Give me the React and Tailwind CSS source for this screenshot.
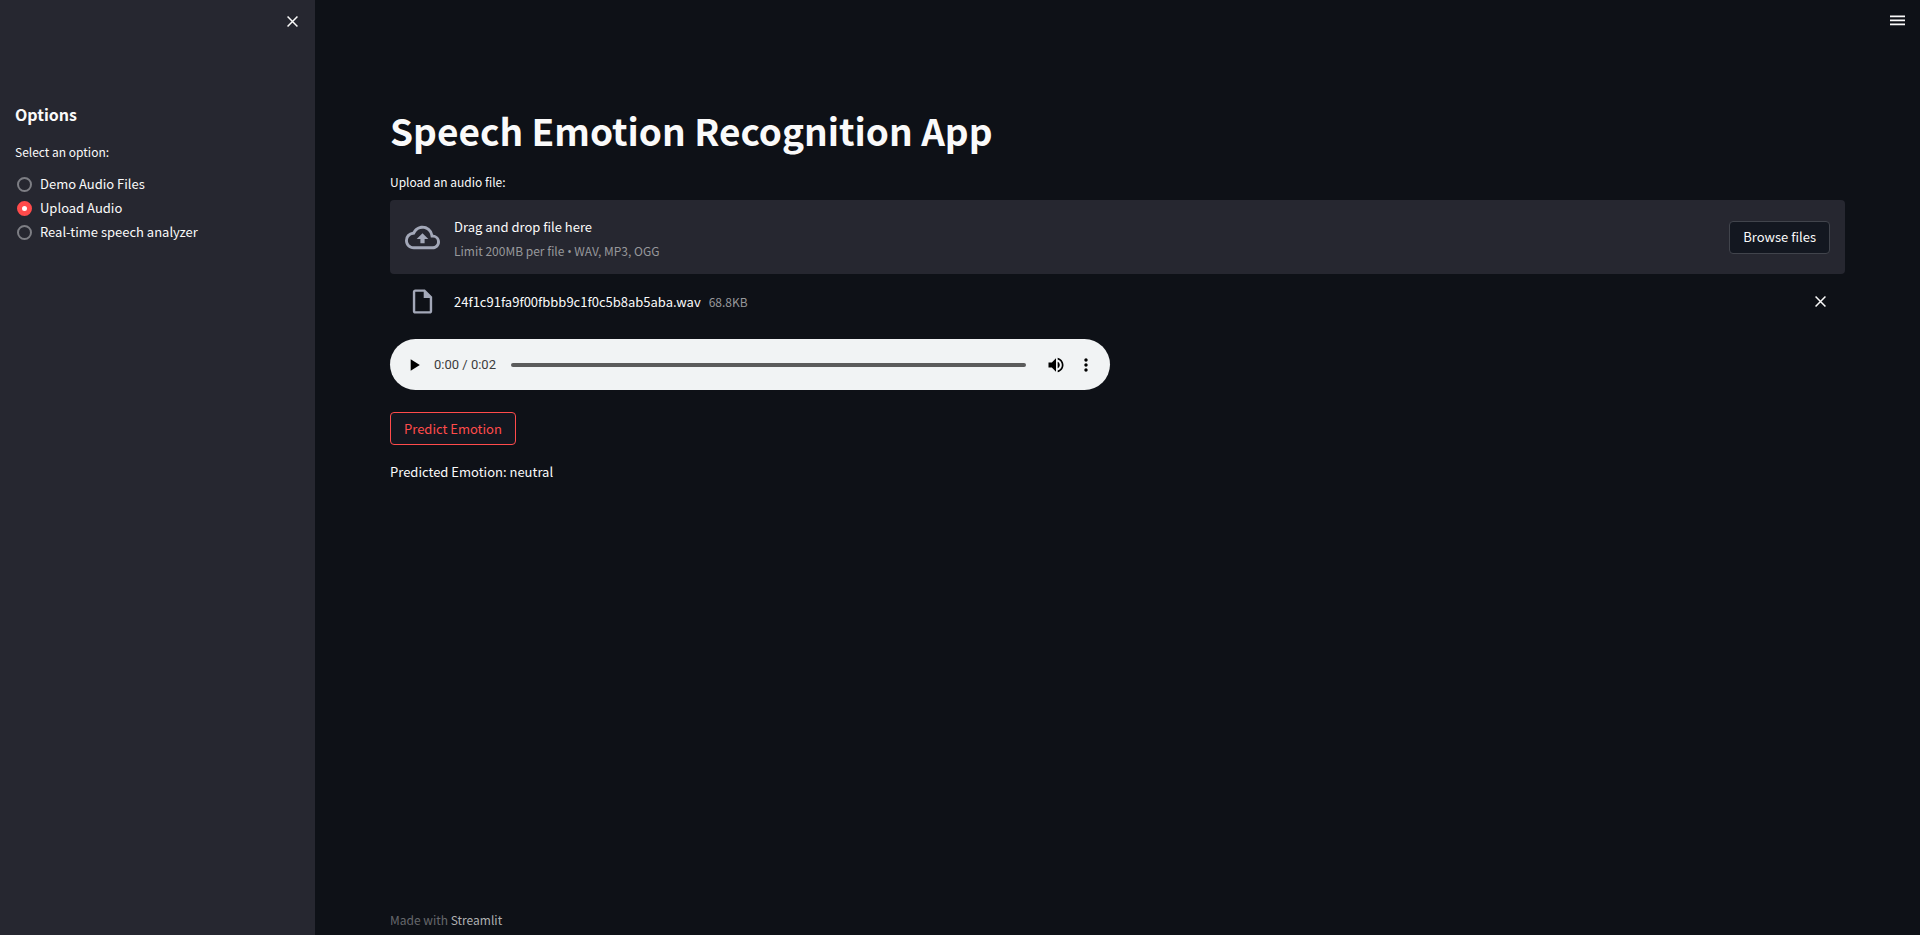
import { useRef, useState } from "react";

const OPTIONS = ["Demo Audio Files", "Upload Audio", "Real-time speech analyzer"];

function CloseIcon() {
  return (
    <svg viewBox="0 0 8 8" className="size-[11px]" fill="none" stroke="currentColor" strokeWidth="1.1" aria-hidden="true">
      <path d="M0.4 0.4 7.6 7.6M7.6 0.4 0.4 7.6" />
    </svg>
  );
}

function Sidebar() {
  const [selected, setSelected] = useState("Upload Audio");
  return (
    <aside className="w-[315px] shrink-0 bg-[#262730]">
      <div className="flex h-[42px] items-center justify-end pr-[17px]">
        <button type="button" aria-label="Close sidebar" className="flex size-3 items-center justify-center">
          <CloseIcon />
        </button>
      </div>
      <div className="px-[15px] pt-[60px]">
        <h2 className="text-[16px] leading-6 font-bold">Options</h2>
        <fieldset className="mt-4">
          <legend className="text-[12px] leading-5">Select an option:</legend>
          <div className="mt-[10px] flex flex-col">
            {OPTIONS.map((option) => (
              <label key={option} className="flex h-6 items-center gap-2 pl-0.5">
                <input
                  type="radio"
                  name="option"
                  value={option}
                  checked={selected === option}
                  onChange={() => setSelected(option)}
                  className="size-[15px] appearance-none rounded-full border-2 border-[#7d7e84] checked:border-5 checked:border-[#ff4b4b] checked:bg-white"
                />
                <span>{option}</span>
              </label>
            ))}
          </div>
        </fieldset>
      </div>
    </aside>
  );
}

function Uploader() {
  const input = useRef(null);
  return (
    <section>
      <label htmlFor="audio-file" className="block text-[12px] leading-5">
        Upload an audio file:
      </label>
      <div className="mt-2 flex h-[74px] items-center rounded bg-[#262730] px-[15px]">
        <svg viewBox="0 0 24 24" className="mr-[14px] size-[35px]" fill="#a3a8b8" aria-hidden="true">
          <path d="M19.35 10.04A7.49 7.49 0 0 0 12 4C9.11 4 6.6 5.64 5.35 8.04A5.994 5.994 0 0 0 0 14c0 3.31 2.69 6 6 6h13c2.76 0 5-2.24 5-5 0-2.64-2.05-4.78-4.65-4.96zM19 18H6c-2.21 0-4-1.79-4-4 0-2.05 1.53-3.76 3.56-3.97l1.07-.11.5-.95A5.469 5.469 0 0 1 12 6c2.62 0 4.88 1.86 5.39 4.43l.3 1.5 1.53.11A2.98 2.98 0 0 1 22 15c0 1.65-1.35 3-3 3zM8 13h2.55v3h2.9v-3H16l-4-4z" />
        </svg>
        <div className="flex flex-1 flex-col gap-1 pt-1">
          <span className="leading-5">Drag and drop file here</span>
          <small className="text-[12px] leading-5 text-[#97989b]">
            Limit 200MB per file <span className="font-['Open_Sans',sans-serif]">•</span> WAV, MP3, OGG
          </small>
        </div>
        <input ref={input} id="audio-file" type="file" accept=".wav,.mp3,.ogg" className="hidden" />
        <button
          type="button"
          onClick={() => input.current.click()}
          className="h-[33px] rounded border border-[#41444c] bg-[#131720] px-[13px]"
        >
          Browse files
        </button>
      </div>
      <div className="flex h-[55px] items-center pr-[19px] pl-[18px]">
        <svg viewBox="0 0 24 24" className="mr-[17px] size-[29px]" fill="#a3a8b8" aria-hidden="true">
          <path d="M14 2H6c-1.1 0-1.99.9-1.99 2L4 20c0 1.1.89 2 1.99 2H18c1.1 0 2-.9 2-2V8l-6-6zM6 20V4h7v5h5v11H6z" />
        </svg>
        <div className="flex flex-1 items-baseline gap-2 leading-5">
          <span>24f1c91fa9f00fbbb9c1f0c5b8ab5aba.wav</span>
          <small className="text-[12px] leading-5 text-[#97989b]">68.8KB</small>
        </div>
        <button type="button" aria-label="Remove file" className="flex size-3 items-center justify-center">
          <CloseIcon />
        </button>
      </div>
    </section>
  );
}

function AudioPlayer() {
  return (
    <div className="mt-[10px] flex h-[51px] w-full max-w-[720px] items-center rounded-full bg-[#f1f3f4] px-[14px] text-black">
      <button type="button" aria-label="Play" className="flex size-5 items-center justify-center">
        <svg viewBox="0 0 24 24" className="size-5" fill="currentColor" aria-hidden="true">
          <path d="M8 5v14l11-7z" />
        </svg>
      </button>
      <span className="ml-[10px] font-[Roboto,sans-serif] text-[13px] leading-5 text-[#3c3c3c]">0:00 / 0:02</span>
      <div className="ml-[15px] h-1 flex-1 rounded-full bg-[#5b5b5b]" />
      <button type="button" aria-label="Mute" className="ml-5 flex size-5 items-center justify-center">
        <svg viewBox="0 0 24 24" className="size-5" fill="currentColor" aria-hidden="true">
          <path d="M3 9v6h4l5 5V4L7 9H3zm13.5 3c0-1.77-1.02-3.29-2.5-4.03v8.05c1.48-.73 2.5-2.25 2.5-4.02zM14 3.23v2.06c2.89.86 5 3.54 5 6.71s-2.11 5.85-5 6.71v2.06c4.01-.91 7-4.49 7-8.77s-2.99-7.86-7-8.77z" />
        </svg>
      </button>
      <button type="button" aria-label="More options" className="ml-[10px] flex size-5 items-center justify-center">
        <svg viewBox="0 0 24 24" className="size-5" fill="currentColor" aria-hidden="true">
          <path d="M12 8c1.1 0 2-.9 2-2s-.9-2-2-2-2 .9-2 2 .9 2 2 2zm0 2c-1.1 0-2 .9-2 2s.9 2 2 2 2-.9 2-2-.9-2-2-2zm0 6c-1.1 0-2 .9-2 2s.9 2 2 2 2-.9 2-2-.9-2-2-2z" />
        </svg>
      </button>
    </div>
  );
}

export default function App() {
  return (
    <div className="flex min-h-screen bg-[#0e1117] font-['Noto_Sans_CJK_SC',sans-serif] text-[13px] leading-5 text-[#fafafa]">
      <Sidebar />
      <div className="flex min-w-0 flex-1 flex-col">
        <header className="flex h-[41px] items-center justify-end pr-[15px]">
          <button type="button" aria-label="Menu" className="flex size-[15px] items-center justify-center">
            <svg viewBox="0 0 15 11" className="h-[11px] w-[15px]" fill="currentColor" aria-hidden="true">
              <path d="M0 .6h15v1.6H0zM0 4.6h15v1.6H0zM0 8.6h15v1.6H0z" />
            </svg>
          </button>
        </header>
        <main className="flex-1 px-[75px] pt-[61px]">
          <h1 className="text-[37px] leading-[56px] font-bold">Speech Emotion Recognition App</h1>
          <div className="mt-[14px]">
            <Uploader />
          </div>
          <AudioPlayer />
          <button
            type="button"
            className="mt-[22px] block h-[33px] rounded border border-[#ff4b4b] bg-[#131720] px-[13px] text-[#ff4b4b]"
          >
            Predict Emotion
          </button>
          <p className="mt-[17px]">Predicted Emotion: neutral</p>
        </main>
        <footer className="px-[75px] pb-[5px] text-[12px] leading-5 text-[#66686c]">
          Made with{" "}
          <a href="#streamlit" className="text-[#afb0b2]">
            Streamlit
          </a>
        </footer>
      </div>
    </div>
  );
}
